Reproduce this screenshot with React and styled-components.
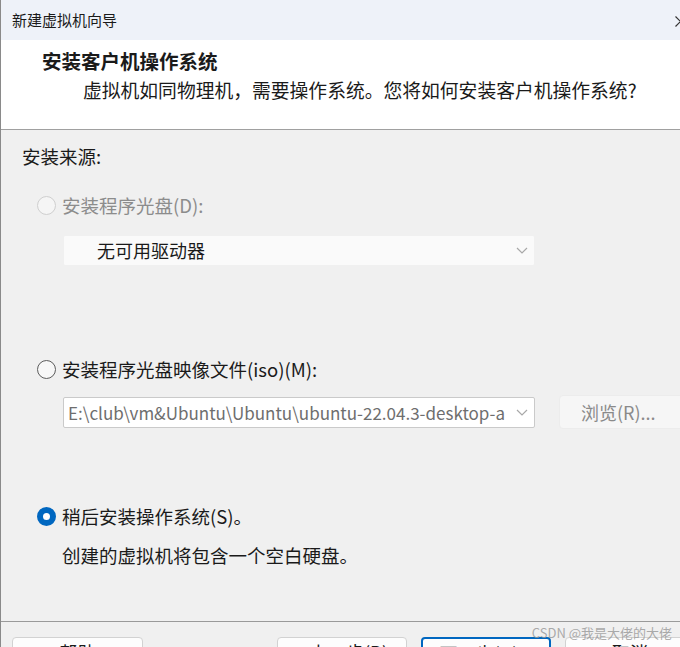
import React, { useState } from 'react';
import styled, { createGlobalStyle, css } from 'styled-components';

const GlobalStyle = createGlobalStyle`
  html, body {
    margin: 0;
    padding: 0;
    background: #f0f0f0;
  }
  body {
    font-family: "Noto Sans CJK SC", "Noto Sans", sans-serif;
    color: #1a1a1a;
  }
`;

function Chevron() {
  return (
    <svg width="12" height="7" viewBox="0 0 12 7">
      <path d="M1 1 L6 6 L11 1" fill="none" stroke="#a8a8a8" strokeWidth="1.2" />
    </svg>
  );
}

function CloseIcon() {
  return (
    <svg width="11" height="11" viewBox="0 0 11 11">
      <path d="M0.5 0.5 L10.5 10.5 M10.5 0.5 L0.5 10.5" stroke="#333" strokeWidth="1.2" />
    </svg>
  );
}

function App() {
  const [source, setSource] = useState('later');

  return (
    <Window>
      <GlobalStyle />
      <TitleBar>
        <TitleText>新建虚拟机向导</TitleText>
        <CloseButton>
          <CloseIcon />
        </CloseButton>
      </TitleBar>

      <Header>
        <HeaderTitle>安装客户机操作系统</HeaderTitle>
        <HeaderSub>虚拟机如同物理机，需要操作系统。您将如何安装客户机操作系统?</HeaderSub>
      </Header>

      <Body>
        <SectionLabel>安装来源:</SectionLabel>

        <RadioRow $gap={23} $disabled>
          <Radio $disabled />
          <span>安装程序光盘(D):</span>
        </RadioRow>
        <FieldRow $gap={17}>
          <Select $muted>
            <SelectText $pad={33}>无可用驱动器</SelectText>
            <Chevron />
          </Select>
        </FieldRow>

        <RadioRow $gap={90} onClick={() => setSource('iso')}>
          <Radio $checked={source === 'iso'} />
          <span>安装程序光盘映像文件(iso)(M):</span>
        </RadioRow>
        <FieldRow $gap={13}>
          <Select>
            <SelectText $pad={4} $gray $size={17}>E:\club\vm&amp;Ubuntu\Ubuntu\ubuntu-22.04.3-desktop-amd64.iso</SelectText>
            <Chevron />
          </Select>
          <BrowseButton>浏览(R)...</BrowseButton>
        </FieldRow>

        <RadioRow $gap={74} onClick={() => setSource('later')}>
          <Radio $checked={source === 'later'} />
          <span>稍后安装操作系统(S)。</span>
        </RadioRow>
        <Description>创建的虚拟机将包含一个空白硬盘。</Description>
      </Body>

      <Footer>
        <Watermark>CSDN @我是大佬的大佬</Watermark>
        <FooterButton $width={131}>帮助</FooterButton>
        <Spacer />
        <FooterButton $width={130}>&lt; 上一步(B)</FooterButton>
        <FooterButton $width={130} $primary>下一步(N) &gt;</FooterButton>
        <FooterButton $width={130}>取消</FooterButton>
      </Footer>
    </Window>
  );
}

const Window = styled.div`
  width: 680px;
  height: 647px;
  overflow: hidden;
  display: flex;
  flex-direction: column;
  border-left: 1px solid #8a8a8a;
  box-sizing: border-box;
  background: #f0f0f0;
`;

const TitleBar = styled.div`
  height: 40px;
  flex: none;
  display: flex;
  align-items: center;
  justify-content: space-between;
  padding-left: 11px;
  background: #eef2f9;
`;

const TitleText = styled.div`
  font-size: 15px;
  line-height: 20px;
  color: #1a1a1a;
`;

const CloseButton = styled.div`
  display: flex;
  align-items: center;
  margin-right: -6px;
  margin-top: 2px;
`;

const Header = styled.div`
  height: 90px;
  flex: none;
  box-sizing: border-box;
  padding: 8px 0 0 41px;
  background: #ffffff;
  border-bottom: 1px solid #a0a0a0;
`;

const HeaderTitle = styled.div`
  font-size: 19.5px;
  font-weight: 700;
  line-height: 26px;
`;

const HeaderSub = styled.div`
  margin: 3px 0 0 41px;
  font-size: 18.8px;
  line-height: 26px;
  white-space: nowrap;
`;

const Body = styled.div`
  flex: 1;
  padding: 13px 0 0 21px;
  display: flex;
  flex-direction: column;
  border-bottom: 1px solid #9a9a9a;
`;

const SectionLabel = styled.div`
  font-size: 18.5px;
  line-height: 26px;
`;

const RadioRow = styled.label`
  margin: ${(p) => p.$gap}px 0 0 15px;
  display: flex;
  align-items: center;
  gap: 6px;
  font-size: 18.5px;
  line-height: 26px;
  color: ${(p) => (p.$disabled ? '#8c8c8c' : '#1a1a1a')};
  cursor: ${(p) => (p.$disabled ? 'default' : 'pointer')};
  white-space: nowrap;
`;

const Radio = styled.span`
  width: 19px;
  height: 19px;
  box-sizing: border-box;
  border-radius: 50%;
  flex: none;
  border: 1px solid #5c5c5c;
  background: #f7f7f7;
  ${(p) =>
    p.$disabled &&
    css`
      border-color: #cfcfcf;
      background: #f5f5f5;
    `}
  ${(p) =>
    p.$checked &&
    css`
      border: 6px solid #0067c0;
      background: #ffffff;
    `}
`;

const FieldRow = styled.div`
  margin: ${(p) => p.$gap}px 0 0 41px;
  display: flex;
  align-items: center;
  gap: 24px;
`;

const Select = styled.div`
  width: 472px;
  height: 31px;
  flex: none;
  box-sizing: border-box;
  display: flex;
  align-items: center;
  padding-right: 6px;
  background: ${(p) => (p.$muted ? '#fafafa' : '#ffffff')};
  border: 1px solid ${(p) => (p.$muted ? '#f0f0f0' : '#cacaca')};
  border-radius: 2px;
`;

const SelectText = styled.div`
  flex: 1;
  min-width: 0;
  overflow: hidden;
  white-space: nowrap;
  padding-left: ${(p) => p.$pad}px;
  margin-right: 11px;
  font-size: ${(p) => p.$size || 18}px;
  line-height: 29px;
  color: ${(p) => (p.$gray ? '#6e6e6e' : '#1a1a1a')};
`;

const BrowseButton = styled.div`
  width: 132px;
  height: 34px;
  flex: none;
  box-sizing: border-box;
  display: flex;
  align-items: center;
  padding-left: 21px;
  font-size: 18px;
  color: #8a8a8a;
  background: #f6f6f6;
  border: 1px solid #ececec;
  border-radius: 4px;
`;

const Description = styled.div`
  margin: 13px 0 0 40px;
  font-size: 18.5px;
  line-height: 26px;
`;

const Footer = styled.div`
  height: 25px;
  flex: none;
  box-sizing: border-box;
  position: relative;
  display: flex;
  align-items: flex-start;
  gap: 14px;
  padding: 15px 0 0 11px;
`;

const Spacer = styled.div`
  width: 106px;
  flex: none;
`;

const FooterButton = styled.div`
  width: ${(p) => p.$width}px;
  height: 34px;
  flex: none;
  box-sizing: border-box;
  display: flex;
  align-items: flex-start;
  justify-content: center;
  font-size: 18px;
  line-height: 22px;
  padding-top: 3px;
  background: #fdfdfd;
  border: ${(p) => (p.$primary ? '2px solid #0067c0' : '1px solid #d2d2d2')};
  border-radius: 4px;
`;

const Watermark = styled.div`
  position: absolute;
  right: 8px;
  top: 3px;
  font-size: 13px;
  line-height: 16px;
  color: rgba(150, 150, 150, 0.8);
  white-space: nowrap;
`;

export default App;
